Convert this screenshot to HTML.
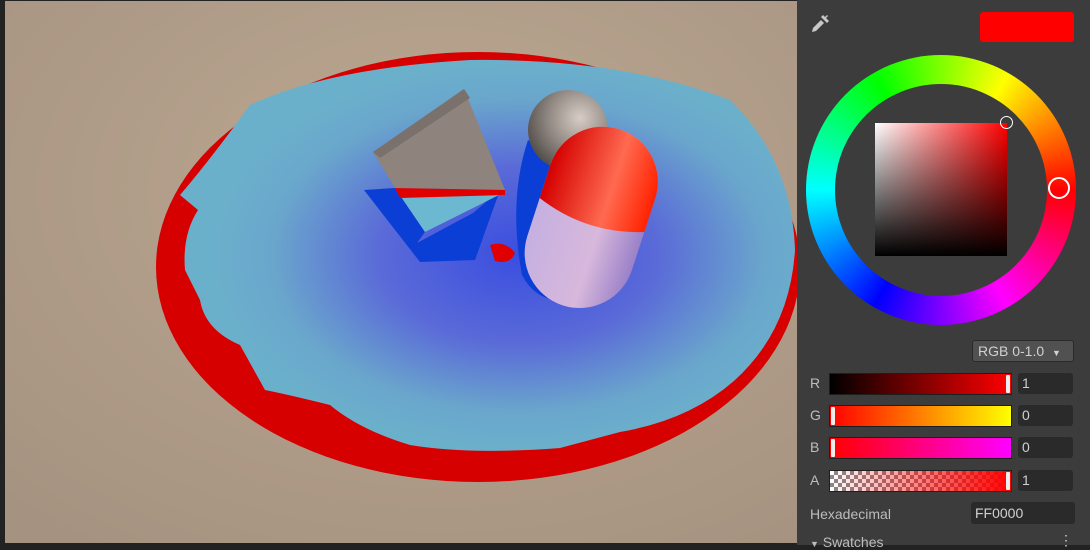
<!DOCTYPE html>
<html><head><style>
body{margin:0;width:1090px;height:545px;overflow:hidden;background:#222;font-family:"Liberation Sans",sans-serif;position:relative}
#scene{position:absolute;left:5px;top:1px;width:792px;height:542px}
#panel{position:absolute;left:797px;top:0;width:293px;height:545px;background:#3c3c3c;color:#c4c4c4;font-size:14px}
.lbl{position:absolute;left:13px;font-size:14px;color:#bdbdbd}
.bar{position:absolute;left:32px;width:181px;height:20px;border:1px solid #1e1e1e}
.fld{position:absolute;left:221px;width:55px;height:21px;background:#2a2a2a;border-radius:3px;color:#d0d0d0;font-size:14px;line-height:21px;padding-left:4px;box-sizing:border-box}
.h{position:absolute;top:1px;width:4px;height:18px;background:#eee;border-radius:1px}
</style></head><body>
<svg id="scene" width="792" height="542" viewBox="5 1 792 542">
<defs>
<radialGradient id="bg" cx="0.55" cy="0.35" r="0.8"><stop offset="0" stop-color="#bca891"/><stop offset="1" stop-color="#a59280"/></radialGradient>
<radialGradient id="bl" cx="0.55" cy="0.5" r="0.5"><stop offset="0" stop-color="#3a4ee0"/><stop offset="0.45" stop-color="#5a6ad8"/><stop offset="0.8" stop-color="#6aa6cc"/><stop offset="1" stop-color="#6bb0cb"/></radialGradient>
<radialGradient id="sp" cx="0.65" cy="0.35" r="0.7"><stop offset="0" stop-color="#d8cdc6"/><stop offset="0.6" stop-color="#8c847e"/><stop offset="1" stop-color="#55504c"/></radialGradient>
<linearGradient id="cr" x1="0" x2="1"><stop offset="0" stop-color="#d40000"/><stop offset="0.6" stop-color="#ff6a50"/><stop offset="1" stop-color="#ff2200"/></linearGradient>
<linearGradient id="cl" x1="0" x2="1"><stop offset="0" stop-color="#c5b0e0"/><stop offset="0.6" stop-color="#d8b8dc"/><stop offset="1" stop-color="#9a80c8"/></linearGradient>
</defs>
<rect x="5" y="1" width="792" height="542" fill="url(#bg)"/>
<ellipse cx="478" cy="267" rx="322" ry="215" fill="#d60000"/>
<path d="M250 105 Q330 68 470 60 Q620 58 730 100 Q792 160 795 250 Q790 330 735 380 Q690 420 620 432 L560 448 Q470 455 410 445 Q360 430 330 405 Q290 395 265 390 L240 345 Q205 330 200 300 L185 270 Q182 235 198 210 L180 195 Q210 160 250 105Z" fill="url(#bl)"/>
<polygon points="364,190 395,188 425,232 417,243 473,213 500,190 475,260 420,262" fill="#0a3ed4"/>
<path d="M528 140 Q508 200 522 275 Q535 300 560 300 L565 160Z" fill="#0a3ed4"/>
<circle cx="568" cy="130" r="40" fill="url(#sp)"/>
<polygon points="373,152 464,89 505,190 395,188" fill="#8e837d"/>
<polygon points="373,152 464,89 470,98 380,158" fill="#7a716d"/>
<polygon points="395,188 505,192 425,232" fill="#6cb8d0"/>
<polygon points="395,188 505,190 505,195 400,198" fill="#e00000"/>
<g transform="rotate(18 592 215)">
<rect x="537" y="125" width="110" height="185" rx="55" fill="url(#cl)"/>
<path d="M537 215 L537 180 A55 55 0 0 1 647 180 L647 215 Q592 235 537 215Z" fill="url(#cr)"/>
</g>
<path d="M490 245 q15 -5 25 8 q-5 12 -20 8z" fill="#e00000"/>
</svg>
<div id="panel">
<svg style="position:absolute;left:12px;top:13px" width="22" height="22" viewBox="0 0 22 22"><path d="M3 19 L4 15 L12 7 L15 10 L7 18Z" fill="#c8c8c8"/><path d="M12 4 L18 10 L20 8 L17 5 L19 3 L18 2 L16 4 L14 2Z" fill="#c8c8c8"/></svg>
<div style="position:absolute;left:183px;top:12px;width:94px;height:30px;background:#ff0000;border-radius:3px"></div>
<div style="position:absolute;left:9px;top:55px;width:270px;height:270px;border-radius:50%;background:conic-gradient(from -30deg,#0f0,#ff0 60deg,#f00 120deg,#f0f 180deg,#00f 240deg,#0ff 300deg,#0f0 360deg)"></div>
<div style="position:absolute;left:38px;top:84px;width:212px;height:212px;border-radius:50%;background:#3c3c3c"></div>
<div style="position:absolute;left:78px;top:123px;width:132px;height:133px;background:linear-gradient(to bottom,rgba(0,0,0,0),#000),linear-gradient(to right,#fff,#f00)"></div>
<div style="position:absolute;left:203px;top:116px;width:11px;height:11px;border:1.5px solid #fff;border-radius:50%"></div>
<div style="position:absolute;left:251px;top:177px;width:22px;height:22px;border:2px solid #fff;border-radius:50%;box-sizing:border-box"></div>
<div style="position:absolute;left:175px;top:340px;width:102px;height:22px;background:#515151;border:1px solid #2a2a2a;border-radius:3px;box-sizing:border-box;font-size:14px;line-height:20px;padding-left:5px;color:#d0d0d0">RGB 0-1.0 <span style="font-size:9px;margin-left:4px">▼</span></div>
<div class="lbl" style="top:375px">R</div>
<div class="bar" style="top:373px;background:linear-gradient(to right,#000,#f00)"><div class="h" style="left:176px"></div></div>
<div class="fld" style="top:373px">1</div>
<div class="lbl" style="top:407px">G</div>
<div class="bar" style="top:405px;background:linear-gradient(to right,#f00,#ff0)"><div class="h" style="left:1px"></div></div>
<div class="fld" style="top:405px">0</div>
<div class="lbl" style="top:439px">B</div>
<div class="bar" style="top:437px;background:linear-gradient(to right,#f00,#f0f)"><div class="h" style="left:1px"></div></div>
<div class="fld" style="top:437px">0</div>
<div class="lbl" style="top:472px">A</div>
<div class="bar" style="top:470px;background:linear-gradient(to right,rgba(255,0,0,0),#f00),repeating-conic-gradient(#888 0 25%,#fff 0 50%) 0 0/8px 8px"><div class="h" style="left:176px"></div></div>
<div class="fld" style="top:470px">1</div>
<div class="lbl" style="top:506px">Hexadecimal</div>
<div style="position:absolute;left:174px;top:502px;width:104px;height:22px;background:#2a2a2a;border-radius:3px;font-size:14px;line-height:22px;padding-left:4px;box-sizing:border-box;color:#d0d0d0">FF0000</div>
<div class="lbl" style="top:534px"><span style="font-size:9px">▼</span> Swatches</div>
<div style="position:absolute;left:262px;top:532px;color:#ccc;font-size:14px">⋮</div>
</div>
</body></html>
